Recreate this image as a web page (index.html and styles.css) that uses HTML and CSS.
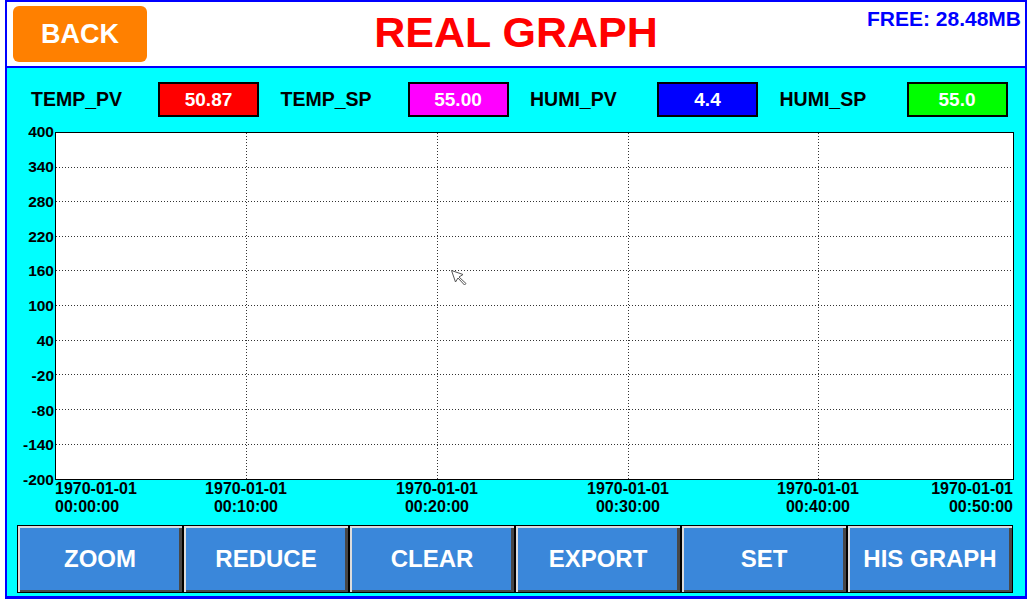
FILE: index.html
```html
<!DOCTYPE html>
<html lang="en">
<head>
<meta charset="utf-8">
<title>REAL GRAPH</title>
<link rel="stylesheet" href="styles.css">
</head>
<body>
<div class="frame">
  <header class="header">
    <button class="back">BACK</button>
    <h1 class="title">REAL GRAPH</h1>
    <div class="free">FREE: 28.48MB</div>
  </header>
  <main class="panel">
    <div class="values">
      <div class="group"><span class="label">TEMP_PV</span><span class="val red">50.87</span></div>
      <div class="group"><span class="label">TEMP_SP</span><span class="val magenta">55.00</span></div>
      <div class="group"><span class="label">HUMI_PV</span><span class="val blue">4.4</span></div>
      <div class="group"><span class="label">HUMI_SP</span><span class="val green">55.0</span></div>
    </div>
    <div class="chart">
      <div class="yaxis">
        <div class="yl"><span>400</span></div>
        <div class="yl"><span>340</span></div>
        <div class="yl"><span>280</span></div>
        <div class="yl"><span>220</span></div>
        <div class="yl"><span>160</span></div>
        <div class="yl"><span>100</span></div>
        <div class="yl"><span>40</span></div>
        <div class="yl"><span>-20</span></div>
        <div class="yl"><span>-80</span></div>
        <div class="yl"><span>-140</span></div>
        <div class="yl"><span>-200</span></div>
      </div>
      <svg class="plot" width="959" height="348" viewBox="0 0 959 348">
        <rect x="0.5" y="0.5" width="958" height="347" fill="#ffffff" stroke="#000000" stroke-width="1"/>
        <g stroke="#333333" stroke-width="1" stroke-dasharray="1 2" fill="none">
          <line x1="1" y1="35.5" x2="958" y2="35.5"/>
          <line x1="1" y1="69.5" x2="958" y2="69.5"/>
          <line x1="1" y1="104.5" x2="958" y2="104.5"/>
          <line x1="1" y1="138.5" x2="958" y2="138.5"/>
          <line x1="1" y1="173.5" x2="958" y2="173.5"/>
          <line x1="1" y1="208.5" x2="958" y2="208.5"/>
          <line x1="1" y1="242.5" x2="958" y2="242.5"/>
          <line x1="1" y1="277.5" x2="958" y2="277.5"/>
          <line x1="1" y1="312.5" x2="958" y2="312.5"/>
          <line x1="191.5" y1="1" x2="191.5" y2="347"/>
          <line x1="382.5" y1="1" x2="382.5" y2="347"/>
          <line x1="573.5" y1="1" x2="573.5" y2="347"/>
          <line x1="763.5" y1="1" x2="763.5" y2="347"/>
        </g>
        <path d="M396.5 138.5 L408 142.5 L404 145 L411 151.5 L409.5 153 L403 146 L400.5 150 Z" fill="#ffffff" stroke="#555555" stroke-width="1"/>
      </svg>
      <div class="xaxis">
        <div class="xl first"><div>1970-01-01<br>00:00:00</div></div>
        <div class="xl"><div>1970-01-01<br>00:10:00</div></div>
        <div class="xl"><div>1970-01-01<br>00:20:00</div></div>
        <div class="xl"><div>1970-01-01<br>00:30:00</div></div>
        <div class="xl"><div>1970-01-01<br>00:40:00</div></div>
        <div class="xl last"><div>1970-01-01<br>00:50:00</div></div>
      </div>
    </div>
    <div class="buttons">
      <button class="btn">ZOOM</button>
      <button class="btn">REDUCE</button>
      <button class="btn">CLEAR</button>
      <button class="btn">EXPORT</button>
      <button class="btn">SET</button>
      <button class="btn">HIS GRAPH</button>
    </div>
  </main>
</div>
</body>
</html>
```

FILE: styles.css
```css
* {
  box-sizing: border-box;
}

html, body {
  margin: 0;
  padding: 0;
  background: #ffffff;
  font-family: "Liberation Sans", Arial, sans-serif;
}

body {
  width: 1030px;
  height: 601px;
  overflow: hidden;
}

.frame {
  margin-left: 5px;
  width: 1022px;
  height: 599px;
  border: 2px solid #0000ff;
  border-bottom-width: 3px;
  display: flex;
  flex-direction: column;
}

/* Header */
.header {
  height: 66px;
  background: #ffffff;
  border-bottom: 2px solid #0000ff;
  display: grid;
  grid-template-columns: 1fr auto 1fr;
  align-items: start;
}

.back {
  justify-self: start;
  margin: 4px 0 0 6px;
  width: 134px;
  height: 56px;
  border: none;
  border-radius: 6px;
  background: #ff8000;
  color: #ffffff;
  font-family: "Liberation Sans", Arial, sans-serif;
  font-weight: bold;
  font-size: 27px;
  padding: 0;
  line-height: 1;
}

.title {
  margin: 9px 0 0 0;
  font-size: 43px;
  line-height: 43px;
  font-weight: bold;
  color: #ff0000;
  white-space: nowrap;
}

.free {
  justify-self: end;
  margin: 6px 4px 0 0;
  font-size: 21px;
  line-height: 21px;
  font-weight: bold;
  color: #0000ff;
  white-space: nowrap;
}

/* Cyan panel */
.panel {
  flex: 1;
  background: #00ffff;
  display: flex;
  flex-direction: column;
}

.values {
  display: flex;
  gap: 21.5px;
  margin: 14px 0 0 24px;
}

.group {
  display: flex;
  align-items: center;
}

.label {
  width: 127px;
  font-size: 19.5px;
  font-weight: bold;
  color: #000000;
  white-space: nowrap;
}

.val {
  width: 101px;
  height: 35px;
  border: 2px solid #000000;
  display: flex;
  align-items: center;
  justify-content: center;
  color: #ffffff;
  font-size: 19px;
  font-weight: bold;
}

.red { background: #ff0000; }
.magenta { background: #ff00ff; }
.blue { background: #0000ff; }
.green { background: #00ff00; }

/* Chart */
.chart {
  margin-top: 15px;
  display: grid;
  grid-template-columns: 48px 959px;
  grid-template-rows: 348px 36px;
}

.yaxis {
  grid-column: 1;
  grid-row: 1;
  display: flex;
  flex-direction: column;
  justify-content: space-between;
  padding-right: 1px;
}

.yl {
  height: 0;
  display: flex;
  align-items: center;
  justify-content: flex-end;
  font-size: 15.5px;
  line-height: 1;
  font-weight: bold;
  color: #000000;
  white-space: nowrap;
}

.plot {
  grid-column: 2;
  grid-row: 1;
  display: block;
}

.xaxis {
  grid-column: 2;
  grid-row: 2;
  display: grid;
  grid-template-columns: 191px 191px 191px 190px 195px 0px;
}

.xl {
  width: 0;
  display: flex;
  justify-content: center;
  font-size: 16px;
  line-height: 18px;
  font-weight: bold;
  color: #000000;
  white-space: nowrap;
  text-align: center;
}

.xl.first {
  justify-content: flex-start;
  text-align: left;
}

.xl.last {
  justify-content: flex-end;
  text-align: right;
}

/* Buttons */
.buttons {
  margin: 9px 0 0 10px;
  display: grid;
  grid-template-columns: repeat(6, 166px);
}

.btn {
  height: 68px;
  border: 1px solid #000000;
  background: #3a87da;
  box-shadow: inset 2px 2px 0 #dcdcdc, inset -3px -2px 0 #474747;
  color: #ffffff;
  font-family: "Liberation Sans", Arial, sans-serif;
  font-size: 24px;
  font-weight: bold;
  padding: 0;
  line-height: 1;
}
```
